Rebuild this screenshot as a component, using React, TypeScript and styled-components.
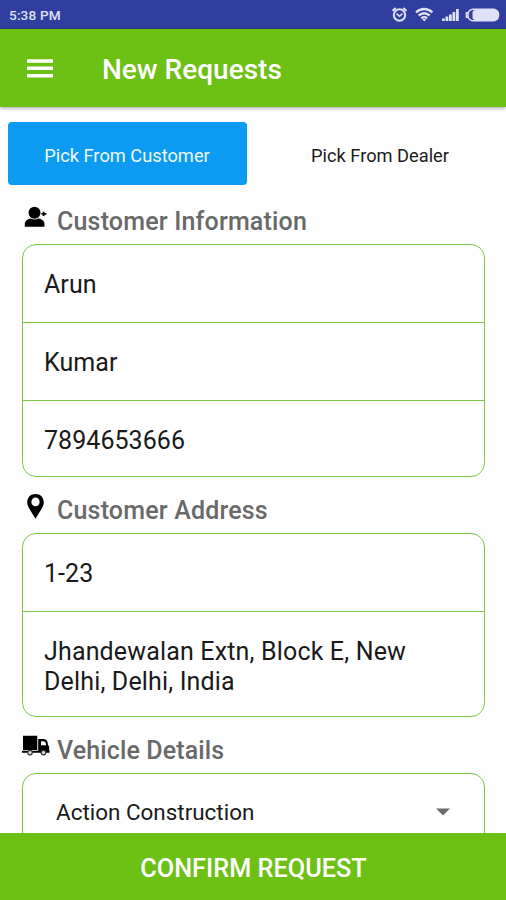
import React from 'react';
import styled, { createGlobalStyle } from 'styled-components';

const GREEN = '#6dc014';

const GlobalStyle = createGlobalStyle`
  * { box-sizing: border-box; }
  html, body { margin: 0; padding: 0; background: #fefefe; }
  body { font-family: Roboto, "Liberation Sans", sans-serif; overflow: hidden; }
  svg { display: block; flex: none; overflow: visible; }
`;

const Screen = styled.div`
  display: flex;
  flex-direction: column;
  width: 506px;
  height: 900px;
  overflow: hidden;
  background: #fefefe;
`;

const StatusBar = styled.div`
  flex: none;
  display: flex;
  align-items: center;
  justify-content: space-between;
  height: 29px;
  padding: 1px 6px 0 9px;
  background: #303f9f;
  border-bottom: 1px solid #2f3a86;
  color: #dfe2f6;
`;

const Clock = styled.span`
  font-size: 13.6px;
  line-height: 16px;
  font-weight: 500;
  letter-spacing: 0.15px;
`;

const StatusIcons = styled.div`
  display: flex;
  align-items: center;
`;

const AppBar = styled.header`
  flex: none;
  display: flex;
  align-items: center;
  gap: 49px;
  height: 78px;
  padding: 1px 27px 0;
  background: ${GREEN};
  color: #fff;
  box-shadow: 0 1px 4px rgba(0, 0, 0, 0.38);
`;

const MenuButton = styled.button`
  padding: 0;
  border: 0;
  background: none;
  color: inherit;
`;

const Title = styled.h1`
  margin: 2px 0 0;
  font-size: 28px;
  line-height: 34px;
  font-weight: 500;
  white-space: nowrap;
`;

const Content = styled.main`
  flex: 1;
  min-height: 0;
  overflow: hidden;
  padding-top: 15px;
`;

const Tabs = styled.div`
  display: flex;
  gap: 14px;
  padding: 0 6.5px 0 7.5px;
`;

const Tab = styled.button<{ $active?: boolean }>`
  flex: 1;
  height: 63px;
  padding: 5px 0 0;
  border: 0;
  border-radius: 4px;
  background: ${p => (p.$active ? '#0c9bf0' : 'transparent')};
  color: ${p => (p.$active ? '#eef8ff' : '#1c1c1c')};
  font-family: inherit;
  font-size: 18.25px;
  line-height: 22px;
  white-space: nowrap;
`;

const Section = styled.section<{ $top: number }>`
  padding: ${p => p.$top}px 21px 0 22px;
`;

const SectionHead = styled.div`
  display: flex;
  align-items: flex-start;
  height: 37px;
`;

const IconSlot = styled.span`
  width: 35px;
  flex: none;
  margin-top: -1px;
`;

const Heading = styled.h2<{ $tracking?: number }>`
  margin: 0;
  font-size: 25px;
  line-height: 30px;
  font-weight: 500;
  letter-spacing: ${p => p.$tracking ?? 0.18}px;
  color: #696969;
  white-space: nowrap;
`;

const Card = styled.div`
  border: 1.5px solid #7cc444;
  border-radius: 14px;
  background: #fff;
`;

const Field = styled.div<{ $height: number; $tracking?: number }>`
  height: ${p => p.$height}px;
  padding: 25px 21px 0;
  font-size: 25px;
  line-height: 30px;
  letter-spacing: ${p => p.$tracking ?? 0.05}px;
  color: #1a1a1a;

  & + & { border-top: 1.5px solid #7cc444; }
`;

const SelectField = styled.div`
  display: flex;
  align-items: center;
  justify-content: space-between;
  height: 75px;
  padding: 0 34px 0 33px;
  font-size: 22.45px;
  line-height: 28px;
  color: #1a1a1a;
`;

const ConfirmButton = styled.button`
  flex: none;
  height: 67px;
  padding: 4px 0 0 1px;
  border: 0;
  background: ${GREEN};
  color: #fff;
  font-family: inherit;
  font-size: 25.3px;
  line-height: 32px;
  font-weight: 500;
`;

const DeviceStatus = () => (
  <svg width="110" height="22" viewBox="0 0 110 22" fill="none" stroke="#dfe2f6">
    <circle cx="9.5" cy="11" r="5.7" strokeWidth="2" />
    <path d="M2.5 6.7 5.8 3.9M16.5 6.7 13.2 3.9" strokeWidth="2" />
    <path d="m6.5 9.7 3 2.6 3-2.6" strokeWidth="1.6" />
    <path d="M26 8.3c5-4.4 11.4-4.4 16.4 0M28.7 11.5c3.4-2.8 7.6-2.8 11 0M31.3 14.3c1.8-1.4 4-1.4 5.8 0" strokeWidth="2.3" />
    <path d="m34.2 17.5-2-2.4h4z" fill="#dfe2f6" stroke="none" />
    <path d="M53.4 17v-2.5M56.9 17v-4.5M60.4 17v-6.5M63.9 17V8M67.4 17V5" strokeWidth="2.8" />
    <rect x="78" y="5.2" width="30.5" height="11.6" rx="5" strokeWidth="1.5" />
    <path d="M78 8.8h-1.5v4.4H78" strokeWidth="1.6" />
    <rect x="82.5" y="6" width="25.5" height="10" rx="3" fill="#dfe2f6" stroke="none" />
  </svg>
);

const MenuIcon = () => (
  <svg width="26" height="20" viewBox="0 0 26 20">
    <path d="M0 2h26M0 9.3h26M0 16.7h26" stroke="currentColor" strokeWidth="3.4" />
  </svg>
);

const PersonAddIcon = () => (
  <svg width="30" height="30" viewBox="0 0 30 30">
    <ellipse cx="12.5" cy="6.7" rx="6" ry="6" />
    <path d="M2.8 20.8v-2.8c0-3 2.6-5.1 6-5.6 2.2 1.5 5.2 1.5 7.4 0 3.7.4 6.3 2.5 6.3 5.6v2.8z" />
    <path d="M21.6 5.7v4.4M19.4 7.9h5" stroke="#000" strokeWidth="1.8" />
  </svg>
);

const PinIcon = () => (
  <svg width="30" height="30" viewBox="0 0 30 30">
    <path fillRule="evenodd" d="M13.5 -1C18.4-1 21.8 2.5 21.8 7.2c0 4.1-2.9 7.4-4.6 10.5L13.5 23.8l-3.7-6.1C8.1 14.6 5.2 11.3 5.2 7.2c0-4.7 3.4-8.2 8.3-8.2zm0 3.6a4.1 4.3 0 1 0 0 8.6 4.1 4.3 0 0 0 0-8.6z" />
  </svg>
);

const TruckIcon = () => (
  <svg width="30" height="30" viewBox="0 0 30 30">
    <path d="M1 .8h14.3v14.3H1zM0 15.8h27.5v2H0z" />
    <path fillRule="evenodd" d="M16.2 4h5.3c3.2 0 4.5 3 4.5 6l1.2 1.5v5h-11zM19 6.3v4h5.1c-.2-2.4-1-4-2.7-4z" />
    <circle cx="8" cy="17.6" r="2.3" fill="#ddd" stroke="#333" strokeWidth="1.2" />
    <circle cx="21.5" cy="17.6" r="2.3" fill="#ddd" stroke="#333" strokeWidth="1.2" />
  </svg>
);

const Caret = () => (
  <svg width="14" height="8" viewBox="0 0 14 8">
    <path d="M0 .5h14L7 7.5z" fill="#6c6c6c" />
  </svg>
);

export default function App() {
  return (
    <Screen>
      <GlobalStyle />
      <StatusBar>
        <Clock>5:38 PM</Clock>
        <StatusIcons><DeviceStatus /></StatusIcons>
      </StatusBar>
      <AppBar>
        <MenuButton aria-label="Menu"><MenuIcon /></MenuButton>
        <Title>New Requests</Title>
      </AppBar>
      <Content>
        <Tabs>
          <Tab $active>Pick From Customer</Tab>
          <Tab>Pick From Dealer</Tab>
        </Tabs>
        <Section $top={22}>
          <SectionHead>
            <IconSlot><PersonAddIcon /></IconSlot>
            <Heading>Customer Information</Heading>
          </SectionHead>
          <Card>
            <Field $height={77}>Arun</Field>
            <Field $height={78}>Kumar</Field>
            <Field $height={76}>7894653666</Field>
          </Card>
        </Section>
        <Section $top={19}>
          <SectionHead>
            <IconSlot><PinIcon /></IconSlot>
            <Heading>Customer Address</Heading>
          </SectionHead>
          <Card>
            <Field $height={77}>1-23</Field>
            <Field $height={105} $tracking={0.16}>Jhandewalan Extn, Block E, New Delhi, Delhi, India</Field>
          </Card>
        </Section>
        <Section $top={19}>
          <SectionHead>
            <IconSlot><TruckIcon /></IconSlot>
            <Heading $tracking={0.12}>Vehicle Details</Heading>
          </SectionHead>
          <Card>
            <SelectField>Action Construction<Caret /></SelectField>
          </Card>
        </Section>
      </Content>
      <ConfirmButton>CONFIRM REQUEST</ConfirmButton>
    </Screen>
  );
}
